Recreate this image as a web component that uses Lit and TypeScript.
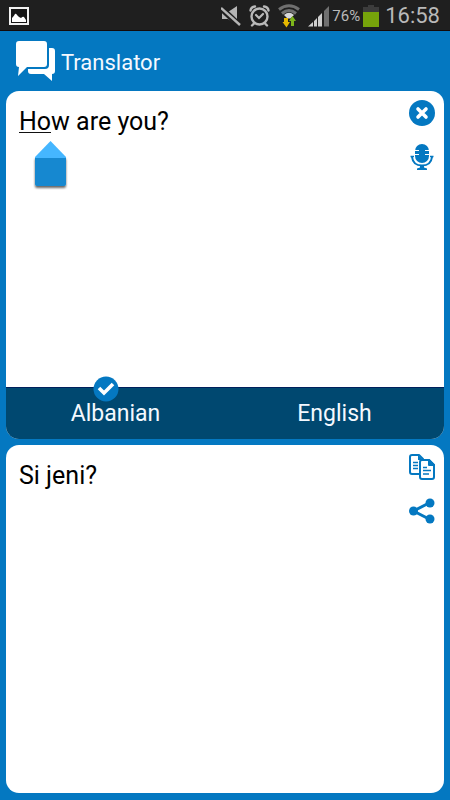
import { LitElement, html, css, svg } from "lit";
import { customElement, state } from "lit/decorators.js";

@customElement("status-bar")
class StatusBar extends LitElement {
  static styles = css`
    :host {
      display: flex;
      align-items: center;
      height: 31px;
      box-sizing: border-box;
      padding: 2px 10px 0 9px;
      background: #1f1f1f;
      border-bottom: 1px solid #140a0a;
      color: #b9b9b9;
      font-family: Roboto, sans-serif;
    }
    svg {
      display: block;
      flex: none;
    }
    .icons {
      display: flex;
      align-items: center;
      gap: 8px;
      margin-left: auto;
    }
    .percent {
      font-size: 15px;
      margin: 0 3px 0 3px;
    }
    .time {
      font-size: 22px;
      line-height: 28px;
      margin-left: 6px;
    }
  `;
  render() {
    return html`
      <svg width="20" height="18" viewBox="0 0 20 18" role="img" aria-label="Picture">
        <rect x="1" y="1" width="18" height="16" fill="#161616" stroke="#f2f2f2" stroke-width="2" />
        <path d="M3 15V11Q5 9 6 7Q7 6 8 8L10 10L12 11Q14 9 15 10L17 13V15Z" fill="#fff" />
      </svg>
      <div class="icons">
        <svg width="20" height="20" viewBox="0 0 20 20" role="img" aria-label="Muted">
          <path d="M1 6H7L16 0V19L7 13H1Z" fill="#b5b5b5" />
          <path d="M0 2L18 19" stroke="#1f1f1f" stroke-width="6" />
          <path d="M0 2L19 19" stroke="#b5b5b5" stroke-width="2.400" />
        </svg>
        <svg width="21" height="22" viewBox="0 0 21 22" role="img" aria-label="Alarm">
          <g fill="none" stroke="#b9b9b9" stroke-linecap="round">
            <circle cx="10.500" cy="11.500" r="8" stroke-width="2.400" />
            <path d="M1.500 5.500Q2 2 6 1.500M19.500 5.500Q19 2 15 1.500" stroke-width="2.400" />
            <path d="M5 18.500L3 20.500M16 18.500L18 20.500" stroke-width="2.400" />
            <path d="M7 10L10 13L14 9" stroke-width="2.200" />
          </g>
        </svg>
        <svg width="22" height="24" viewBox="0 0 22 24" role="img" aria-label="Wi-Fi">
          <g fill="none" stroke-width="3">
            <path d="M1 5.500Q11 -2 21 5.500" stroke="#707070" />
            <path d="M4 9.500Q11 3.500 18 9.500" stroke="#707070" />
          </g>
          <path d="M6 11Q11 6.500 16 11L12.500 14.500H9.500Z" fill="#d8d8d8" />
          <path d="M6 14H10V18H12L8.500 23.500L4.500 18H6Z" fill="#e6b800" />
          <path d="M13 22V17H11L14.500 12L18 17H16V22Z" fill="#7db51b" />
        </svg>
        <svg width="21" height="21" viewBox="0 0 21 21" role="img" aria-label="Signal">
          <path d="M0 20.500L5 16V20.500Z M6 15L9 12V20.500H6Z M10 11L14 7V20.500H10Z" fill="#cfcfcf" />
          <path d="M16 5L21 0V20.500H16Z" fill="#707070" />
        </svg>
      </div>
      <span class="percent">76%</span>
      <svg width="16" height="22" viewBox="0 0 16 22" role="img" aria-label="Battery">
        <path d="M5 0H11V2H16V22H0V2H5Z" fill="#3c3c3c" />
        <path d="M0 7H16V22H0Z" fill="#76a30b" />
      </svg>
      <span class="time">16:58</span>
    `;
  }
}

const icons = {
  clear: svg`<circle cx="13" cy="13" r="13" fill="#0478c1"/><path d="M9 9L17 17M17 9L9 17" stroke="#fff" stroke-width="3.600" stroke-linecap="round"/>`,
  mic: svg`<rect x="6" y="0" width="14" height="19" rx="7" fill="#0478c1"/>
    <path d="M6 6.500H10M6 10.500H10M16 6.500H20M16 10.500H20" stroke="#fff" stroke-width="1"/>
    <path d="M3 13Q4 21.500 13 21.500Q22 21.500 23 13" fill="none" stroke="#0478c1" stroke-width="2"/>
    <path d="M1.500 12.500H5M21 12.500H24.500" stroke="#0478c1" stroke-width="1.500"/>
    <path d="M11 22H15V23.500L18 24.500V26H8V24.500L11 23.500Z" fill="#0478c1"/>`,
  copy: svg`<g fill="#fff" stroke="#0478c1" stroke-width="2" stroke-linejoin="round">
      <path d="M3 1H10L14 5V20H3Q1 20 1 18V3Q1 1 3 1Z"/>
      <path d="M4 8.500H9M4 11.500H9M4 14.500H9" stroke-width="1.500"/>
      <path d="M13 6H20L25 11V23Q25 25 23 25H13Q11 25 11 23V8Q11 6 13 6Z"/>
      <path d="M20 6V11H25Z" fill="#0478c1"/>
      <path d="M14 13.500H18M14 16.500H22M14 20H20" stroke-width="1.500"/>
    </g><path d="M9 1L14 6H9Z" fill="#0478c1"/>`,
  share: svg`<path d="M21 4.500L4.500 13L21 21.500" fill="none" stroke="#0478c1" stroke-width="3"/>
    <g fill="#0478c1"><circle cx="21" cy="5" r="4.500"/><circle cx="4.500" cy="13" r="4.500"/><circle cx="21" cy="21" r="4.500"/></g>`,
};

@customElement("app-root")
class AppRoot extends LitElement {
  @state() private source = "How are you?";
  @state() private language = "Albanian";

  static styles = css`
    :host {
      display: flex;
      flex-direction: column;
      min-height: 100vh;
      background: #0478c1;
      font-family: Roboto, sans-serif;
    }
    svg {
      display: block;
      flex: none;
    }
    header {
      display: flex;
      align-items: center;
      gap: 6px;
      height: 60px;
      padding: 0 16px;
    }
    h1 {
      margin: 0;
      padding-top: 3px;
      color: #f4f9ff;
      font-size: 22px;
      font-weight: 400;
      line-height: 28px;
    }
    main {
      flex: 1;
      display: grid;
      grid-template-rows: 1fr 1fr;
      gap: 6px;
      padding: 0 6px 7px;
    }
    .card {
      display: flex;
      flex-direction: column;
      border-radius: 13px;
      background: #fff;
      overflow: hidden;
    }
    .body {
      position: relative;
      flex: 1;
      display: flex;
      padding: 9px 9px 0 13px;
    }
    .text {
      flex: 1;
      min-width: 0;
      margin: 0;
      padding: 6px 0 0;
      border: 0;
      outline: 0;
      resize: none;
      background: transparent;
      color: #000;
      font: 400 25px/32px Roboto, sans-serif;
    }
    .tools {
      display: flex;
      flex-direction: column;
      gap: 18px;
    }
    button {
      border: 0;
      padding: 0;
      background: none;
      font: inherit;
      cursor: pointer;
    }
    .composing {
      position: absolute;
      left: 13px;
      top: 41px;
      width: 32px;
      height: 1px;
      background: #111;
    }
    .handle {
      position: absolute;
      left: 26px;
      top: 49px;
    }
    .languages {
      display: grid;
      grid-template-columns: 1fr 1fr;
      border-top: 1px solid #00205c;
      background: #004870;
    }
    .language {
      position: relative;
      height: 51px;
      color: #f4f9ff;
      font-size: 23px;
      line-height: 51px;
    }
    .badge {
      position: absolute;
      left: calc(50% - 23px);
      top: -12px;
    }
  `;

  private languageButton(name: string) {
    const chosen = this.language === name;
    return html`<button
      class="language"
      aria-pressed=${chosen ? "true" : "false"}
      @click=${() => (this.language = name)}
    >
      ${chosen
        ? html`<svg class="badge" width="26" height="26" viewBox="0 0 26 26" aria-hidden="true">
            <circle cx="13" cy="13" r="12.500" fill="#0478c1" />
            <path d="M6 12L11 17L20 8" fill="none" stroke="#fff" stroke-width="3.600" />
          </svg>`
        : ""}${name}
    </button>`;
  }

  private tool(label: string, icon: unknown, action?: () => void) {
    return html`<button aria-label=${label} @click=${action}>
      <svg width="26" height="26" viewBox="0 0 26 26" aria-hidden="true">${icon}</svg>
    </button>`;
  }

  render() {
    return html`
      <status-bar></status-bar>
      <header>
        <svg width="39" height="40" viewBox="0 0 39 40" aria-hidden="true">
          <path d="M33 7H36Q39 7 39 10V30Q39 33 36 33V40L28 33H15Q12 33 12 30V28H29Q33 28 33 24Z" fill="#fff" />
          <path d="M3 0H28Q31 0 31 3V23Q31 26 28 26H11L2 35L3 26Q0 26 0 23V3Q0 0 3 0Z" fill="#fff" />
        </svg>
        <h1>Translator</h1>
      </header>
      <main>
        <section class="card">
          <div class="body">
            <textarea
              class="text"
              aria-label="Text to translate"
              spellcheck="false"
              .value=${this.source}
              @input=${(e: Event) => (this.source = (e.target as HTMLTextAreaElement).value)}
            ></textarea>
            ${this.source
              ? html`<span class="composing"></span>
                  <svg class="handle" width="38" height="52" viewBox="0 0 38 52" aria-hidden="true">
                    <defs>
                      <filter id="shade" x="-20%" y="-20%" width="140%" height="150%">
                        <feDropShadow dx="0" dy="2" stdDeviation="1" flood-color="#000" flood-opacity="0.6" />
                      </filter>
                    </defs>
                    <path d="M3 17H34V44Q34 46 32 46H5Q3 46 3 44Z" fill="#1488d0" filter="url(#shade)" />
                    <path d="M3 17L18.500 1L34 17V18H3Z" fill="#45b6ff" />
                  </svg>`
              : ""}
            <div class="tools">
              ${this.tool("Clear", icons.clear, () => (this.source = ""))}
              ${this.tool("Speak", icons.mic)}
            </div>
          </div>
          <div class="languages">
            ${this.languageButton("Albanian")}${this.languageButton("English")}
          </div>
        </section>
        <section class="card">
          <div class="body">
            <p class="text">Si jeni?</p>
            <div class="tools">${this.tool("Copy", icons.copy)}${this.tool("Share", icons.share)}</div>
          </div>
        </section>
      </main>
    `;
  }
}
